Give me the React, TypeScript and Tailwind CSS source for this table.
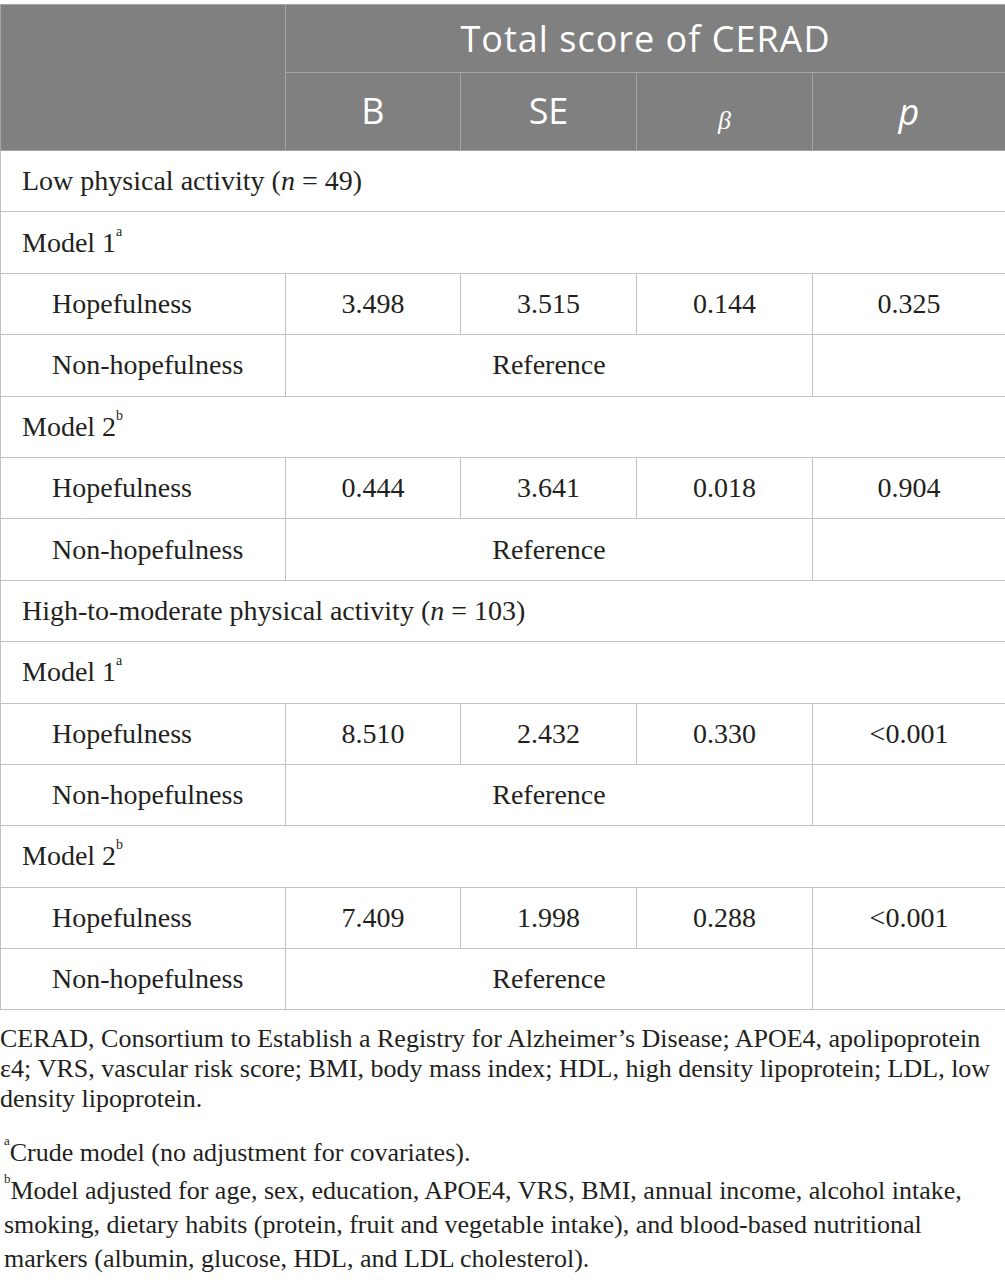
import React from "react";

type Row =
  | { kind: "section"; label: React.ReactNode }
  | { kind: "value"; label: string; b: string; se: string; beta: string; p: string }
  | { kind: "ref"; label: string };

const rows: Row[] = [
  { kind: "section", label: <>Low physical activity (<i>n</i> = 49)</> },
  { kind: "section", label: <>Model 1<sup className="text-[14px] align-[9px]">a</sup></> },
  { kind: "value", label: "Hopefulness", b: "3.498", se: "3.515", beta: "0.144", p: "0.325" },
  { kind: "ref", label: "Non-hopefulness" },
  { kind: "section", label: <>Model 2<sup className="text-[14px] align-[9px]">b</sup></> },
  { kind: "value", label: "Hopefulness", b: "0.444", se: "3.641", beta: "0.018", p: "0.904" },
  { kind: "ref", label: "Non-hopefulness" },
  { kind: "section", label: <>High-to-moderate physical activity (<i>n</i> = 103)</> },
  { kind: "section", label: <>Model 1<sup className="text-[14px] align-[9px]">a</sup></> },
  { kind: "value", label: "Hopefulness", b: "8.510", se: "2.432", beta: "0.330", p: "<0.001" },
  { kind: "ref", label: "Non-hopefulness" },
  { kind: "section", label: <>Model 2<sup className="text-[14px] align-[9px]">b</sup></> },
  { kind: "value", label: "Hopefulness", b: "7.409", se: "1.998", beta: "0.288", p: "<0.001" },
  { kind: "ref", label: "Non-hopefulness" },
];

const cell = "border border-[#c2c2c2] h-[61.4px] p-0 text-center";

export default function App() {
  return (
    <div className="w-[1005px] bg-white pt-[4px] text-[#231f20] font-['Liberation_Serif',serif]">
      <table className="w-[1005px] table-fixed border-collapse">
        <colgroup>
          <col className="w-[285px]" />
          <col className="w-[175px]" />
          <col className="w-[176px]" />
          <col className="w-[176px]" />
          <col className="w-[193px]" />
        </colgroup>
        <thead className="bg-[#808080] text-white font-['Open_Sans',sans-serif]">
          <tr>
            <th rowSpan={2} className="border border-[#a6a6a6] p-0" />
            <th colSpan={4} className="border border-[#a6a6a6] h-[68px] p-0 text-[36px] tracking-[1px] font-normal">
              Total score of CERAD
            </th>
          </tr>
          <tr>
            <th className="border border-[#a6a6a6] h-[78px] p-0 pb-[2px] text-[36px] font-normal">B</th>
            <th className="border border-[#a6a6a6] p-0 pb-[2px] text-[36px] font-normal">SE</th>
            <th className="border border-[#a6a6a6] p-0 font-normal">
              <span className="inline-block pt-[18px] text-[26px] italic font-['Liberation_Serif',serif]">β</span>
            </th>
            <th className="border border-[#a6a6a6] p-0 text-[36px] font-normal italic">p</th>
          </tr>
        </thead>
        <tbody className="text-[28px]">
          {rows.map((r, i) => {
            if (r.kind === "section")
              return (
                <tr key={i}>
                  <td colSpan={5} className={`${cell} text-left pl-[21px]`}>{r.label}</td>
                </tr>
              );
            if (r.kind === "value")
              return (
                <tr key={i}>
                  <td className={`${cell} text-left pl-[51px]`}>{r.label}</td>
                  <td className={cell}>{r.b}</td>
                  <td className={cell}>{r.se}</td>
                  <td className={cell}>{r.beta}</td>
                  <td className={cell}>{r.p}</td>
                </tr>
              );
            return (
              <tr key={i}>
                <td className={`${cell} text-left pl-[51px]`}>{r.label}</td>
                <td colSpan={3} className={cell}>Reference</td>
                <td className={cell} />
              </tr>
            );
          })}
        </tbody>
      </table>
      <div className="pt-[14px] text-[26px] leading-[30px]">
        <p>
          CERAD, Consortium to Establish a Registry for Alzheimer’s Disease; APOE4, apolipoprotein ε4; VRS, vascular
          risk score; BMI, body mass index; HDL, high density lipoprotein; LDL, low density lipoprotein.
        </p>
        <p className="mt-[24px] pl-[4px]">
          <sup className="text-[13px] leading-none align-[10px]">a</sup>Crude model (no adjustment for covariates).
        </p>
        <p className="mt-[6px] pl-[4px] leading-[34px]">
          <sup className="text-[13px] leading-none align-[10px]">b</sup>Model adjusted for age, sex, education, APOE4,
          VRS, BMI, annual income, alcohol intake, smoking, dietary habits (protein, fruit and vegetable intake), and
          blood-based nutritional markers (albumin, glucose, HDL, and LDL cholesterol).
        </p>
      </div>
    </div>
  );
}
